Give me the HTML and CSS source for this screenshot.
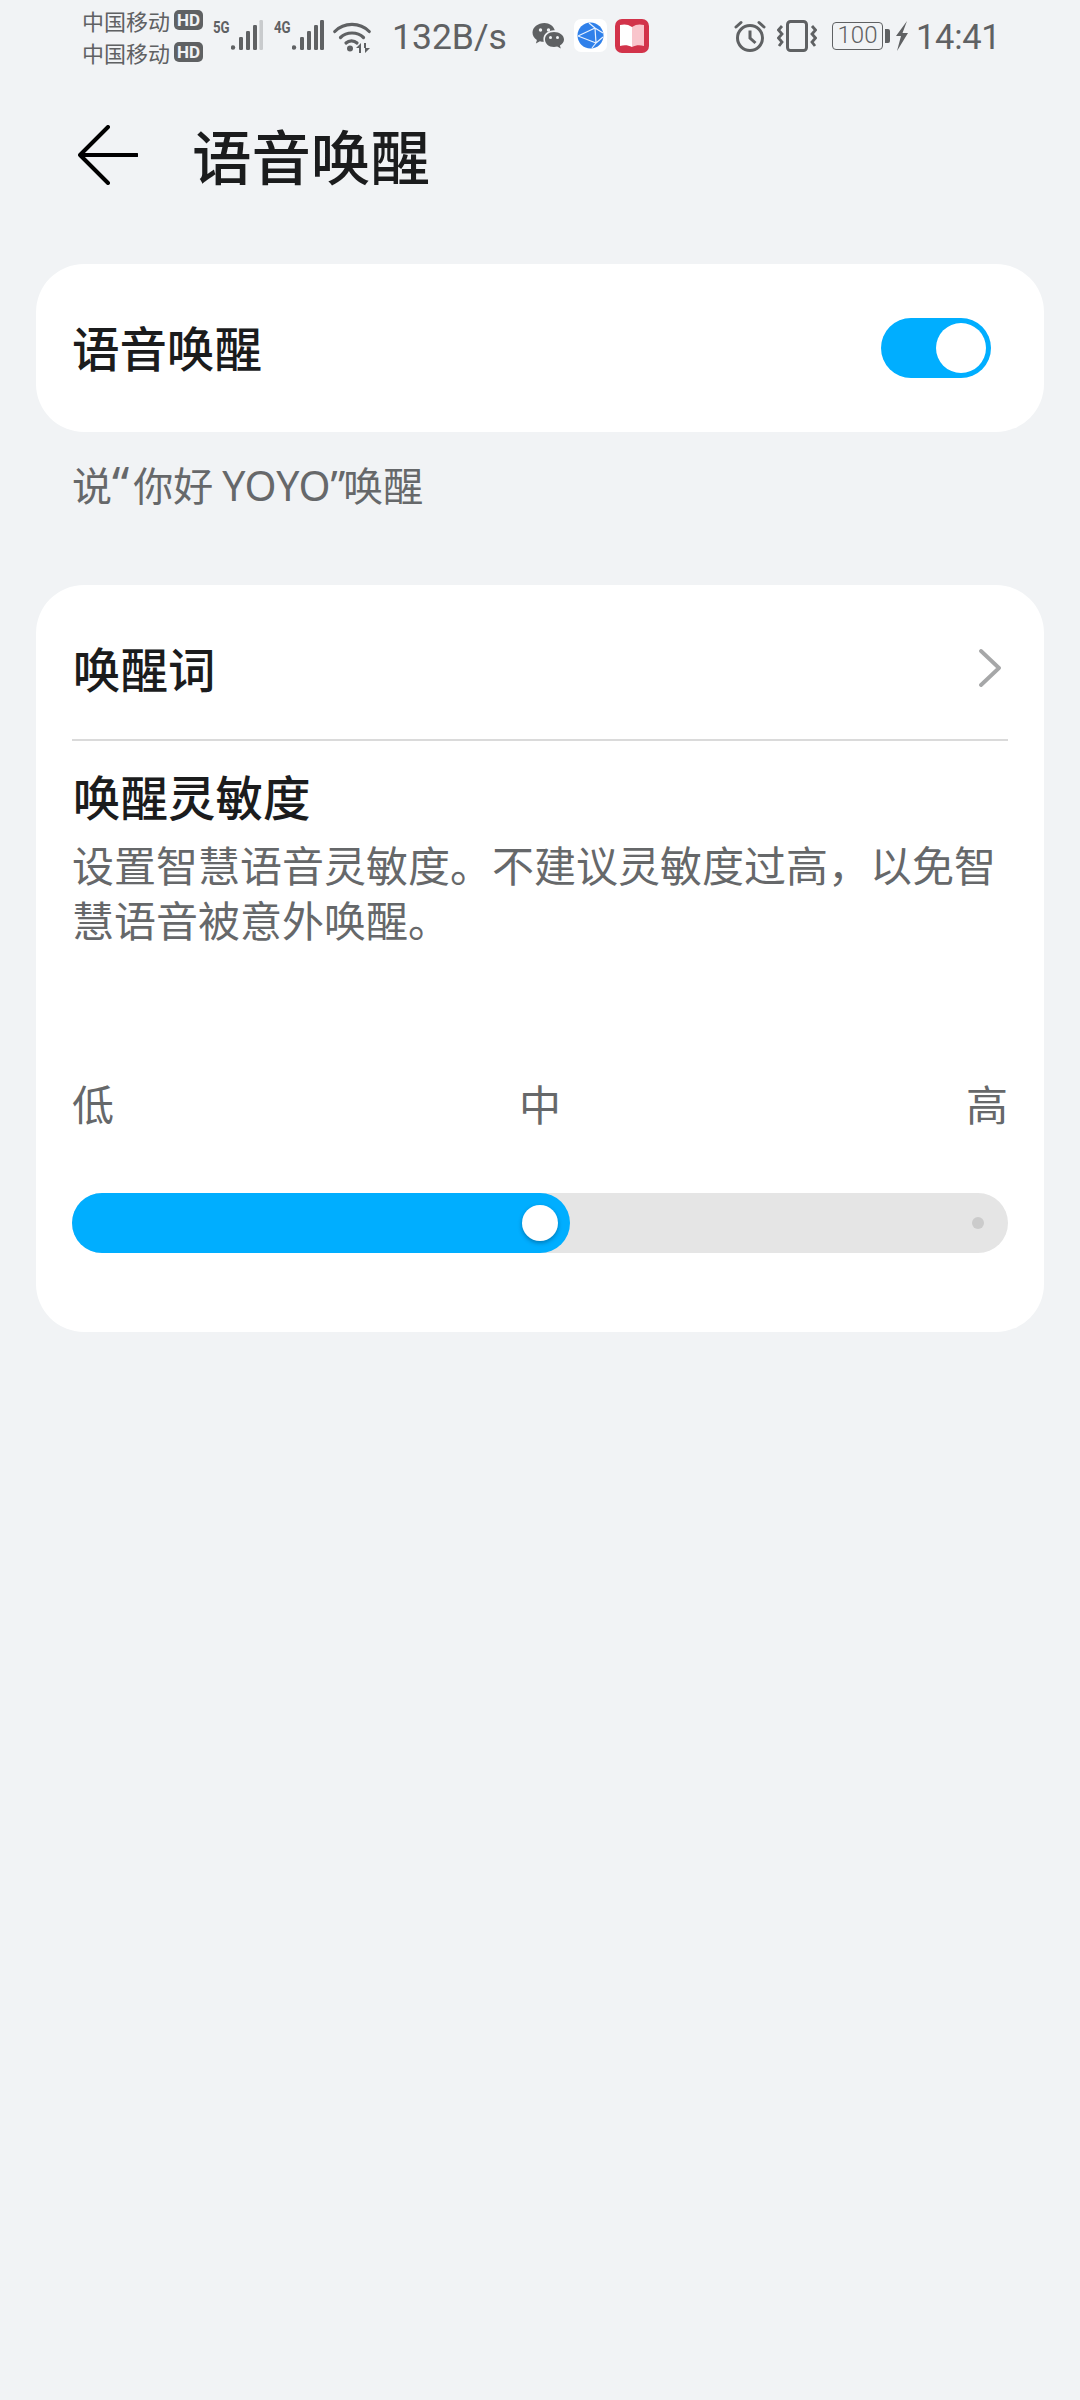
FILE: index.html
```html
<!DOCTYPE html>
<html lang="zh-CN">
<head>
<meta charset="utf-8">
<title>语音唤醒</title>
<link rel="stylesheet" href="styles.css">
</head>
<body>
<div class="statusbar">
  <div class="carriers">
    <div class="carrier"><span>中国移动</span><span class="hd">HD</span></div>
    <div class="carrier"><span>中国移动</span><span class="hd">HD</span></div>
  </div>
  <div class="net net-first">
    <span class="gen">5G</span>
    <svg class="bars" viewBox="0 0 32 30"><circle cx="2" cy="27.5" r="2.200" fill="#5f6163"/><rect x="8" y="17" width="4" height="13" rx="1.200" fill="#5f6163"/><rect x="15" y="11" width="4" height="19" rx="1.200" fill="#5f6163"/><rect x="22" y="5" width="4" height="25" rx="1.200" fill="#5f6163"/><rect x="28.400" y="0" width="3.600" height="30" rx="1.200" fill="#c9cbcd"/></svg>
  </div>
  <div class="net net-second">
    <span class="gen">4G</span>
    <svg class="bars" viewBox="0 0 32 30"><circle cx="2" cy="27.5" r="2.200" fill="#5f6163"/><rect x="8" y="17" width="4" height="13" rx="1.200" fill="#5f6163"/><rect x="15" y="11" width="4" height="19" rx="1.200" fill="#5f6163"/><rect x="22" y="5" width="4" height="25" rx="1.200" fill="#5f6163"/><rect x="28" y="0" width="4" height="30" rx="1.200" fill="#5f6163"/></svg>
  </div>
  <svg class="wifi" viewBox="0 0 38 32"><g fill="none" stroke="#5f6163" stroke-width="3.200" stroke-linecap="round"><path d="M1.800 10.500C11 1 27 1 36.200 10.500"/><path d="M7.500 16.500C13.500 10.500 24.500 10.500 30.500 16.500"/><path d="M13 22C16 19.200 21 19.200 24 22"/></g><circle cx="17" cy="27.500" r="3" fill="#5f6163"/><path d="M23 27l5-5v10h-2v-5zM31 22h2v5h4l-5 5v-5h-1z" fill="#5f6163"/></svg>
  <span class="speed">132B/s</span>
  <svg class="wechat" viewBox="0 0 32 28"><path d="M12 0C5.400 0 0 4.300 0 9.600c0 3 1.700 5.600 4.400 7.400L3.400 20.400l4-2.200c1.200.4 2.500.6 3.900.6-.3-1-.4-1.800-.4-2.700 0-5 4.700-8.800 10.600-8.800h.8C21 2.900 16.900 0 12 0z" fill="#5f6163"/><circle cx="8" cy="7" r="1.700" fill="#f1f3f5"/><circle cx="16" cy="7" r="1.700" fill="#f1f3f5"/><path d="M21.500 9C15.900 9 12.500 12.500 12.500 16.400s3.400 7.500 9 7.500c1.100 0 2.200-.2 3.200-.5l3.600 2-.9-3c2.700-1.600 4.100-3.700 4.100-6 0-3.900-4.400-7.400-10-7.400z" fill="#5f6163"/><circle cx="18" cy="14.500" r="1.500" fill="#f1f3f5"/><circle cx="25" cy="14.500" r="1.500" fill="#f1f3f5"/></svg>
  <svg class="app-blue" viewBox="0 0 33 33"><rect width="33" height="33" rx="7" fill="#fff"/><circle cx="16.500" cy="16.500" r="13" fill="#2f80ea"/><g fill="none" stroke="#e6f0ff" stroke-width="1.200"><path d="M4 17L21 9M4 17l18 7M21 9l1 15M21 9L15 4M22 24l-4 5M21 9l8 5M22 24l7-6"/></g></svg>
  <svg class="app-red" viewBox="0 0 34 34"><rect width="34" height="34" rx="7" fill="#d2334a"/><path d="M5 6c4-1 8-1 12 2v20c-4-2-8-2-12-1z" fill="#fff"/><path d="M17 8c4-3 8-3 12-2v21c-4-1-8-1-12 1z" fill="#f9c5cc"/></svg>
  <div class="status-right">
    <svg class="alarm" viewBox="0 0 32 32"><circle cx="16" cy="18" r="12.500" fill="none" stroke="#5f6163" stroke-width="3"/><path d="M16 10.500V18l5.500 5" fill="none" stroke="#5f6163" stroke-width="3"/><path d="M2 7l5-4.500M30 7l-5-4.500" fill="none" stroke="#5f6163" stroke-width="3" stroke-linecap="round"/></svg>
    <svg class="vibrate" viewBox="0 0 40 32"><rect x="10.500" y="1.500" width="19" height="29" rx="3" fill="none" stroke="#5f6163" stroke-width="3"/><path d="M5 6L1.500 10 5 14 1.500 18 5 22 2 26M35 6l3.500 4L35 14l3.500 4L35 22l3 4" fill="none" stroke="#5f6163" stroke-width="2.800"/></svg>
    <div class="battery"><span class="battery-box">100</span><span class="battery-nib"></span></div>
    <svg class="bolt" viewBox="0 0 14 30"><path d="M12 0L1 15h5L2 30 13 12H7.500z" fill="#5f6163"/></svg>
    <span class="clock">14:41</span>
  </div>
</div>

<div class="toolbar">
  <svg class="back" viewBox="0 0 60 60"><path d="M59 30H2M30 2L2 30l28 28" fill="none" stroke="#000" stroke-width="4" stroke-linecap="round" stroke-linejoin="round"/></svg>
  <h1 class="page-title">语音唤醒</h1>
</div>

<section class="card card-switch">
  <span class="item-title">语音唤醒</span>
  <span class="switch"><span class="switch-knob"></span></span>
</section>
<p class="hint">说<span class="latin quote-open">“</span>你好 <span class="latin quote-close">YOYO”</span>唤醒</p>

<section class="card card-main">
  <div class="row-link">
    <span class="item-title">唤醒词</span>
    <svg class="chevron" viewBox="0 0 22 38"><path d="M2 2l18 17L2 36" fill="none" stroke="#a6a7a8" stroke-width="3.800" stroke-linecap="round" stroke-linejoin="round"/></svg>
  </div>
  <div class="sensitivity">
    <div class="item-title">唤醒灵敏度</div>
    <p class="desc">设置智慧语音灵敏度。不建议灵敏度过高，以免智慧语音被意外唤醒。</p>
    <div class="levels"><span>低</span><span>中</span><span>高</span></div>
    <div class="slider">
      <div class="slider-fill"><span class="slider-thumb"></span></div>
      <span class="slider-dot"></span>
    </div>
  </div>
</section>
</body>
</html>
```

FILE: styles.css
```css
* { box-sizing: border-box; }
html, body { margin: 0; padding: 0; }
body {
  width: 1080px;
  height: 2400px;
  background: #f1f3f5;
  font-family: "Noto Sans CJK SC", "Noto Sans", sans-serif;
  overflow: hidden;
}
.statusbar {
  height: 70px;
  padding-left: 82px;
  display: flex;
  align-items: flex-start;
  color: #5f6163;
  font-family: Roboto, "Noto Sans CJK SC", sans-serif;
}
.carriers { width: 121px; padding-top: 4px; flex: none; }
.carrier {
  display: flex;
  align-items: center;
  height: 32px;
  font-size: 22px;
  font-family: "Noto Sans CJK SC", sans-serif;
}
.hd {
  margin-left: 4px;
  width: 29px;
  height: 20px;
  border-radius: 5px;
  background: #5f6163;
  color: #f1f3f5;
  font: 700 17px/20px Roboto, sans-serif;
  text-align: center;
}
.net { display: flex; flex: none; align-items: flex-start; margin-top: 20px; }
.net-first { margin-left: 10px; }
.net-second { margin-left: 11px; }
.gen {
  width: 18px;
  font: 700 17px/14px Roboto, sans-serif;
  transform: scaleX(.78);
  transform-origin: left;
}
.bars { width: 32px; height: 30px; display: block; }
.wifi { width: 38px; height: 32px; margin: 21px 0 0 9px; flex: none; }
.speed { margin: 15px 0 0 21px; font-size: 35.500px; line-height: 44px; width: 115px; flex: none; }
.wechat { width: 33px; height: 28px; margin: 23px 0 0 25px; flex: none; }
.app-blue { width: 33px; height: 33px; margin: 19px 0 0 9px; flex: none; }
.app-red { width: 34px; height: 34px; margin: 19px 0 0 8px; flex: none; }
.status-right { display: flex; align-items: flex-start; margin-left: 85px; flex: none; }
.alarm { width: 32px; height: 32px; margin-top: 20px; }
.vibrate { width: 40px; height: 32px; margin: 20px 0 0 11px; }
.battery { display: flex; align-items: center; margin: 22px 0 0 15px; height: 28px; }
.battery-box {
  width: 51px;
  height: 28px;
  border: 1.500px solid #5f6163;
  border-radius: 4px;
  font-size: 24px;
  font-weight: 300;
  line-height: 25px;
  text-align: center;
}
.battery-nib { width: 5px; height: 14px; margin-left: 2px; border-radius: 0 2px 2px 0; background: #5f6163; }
.bolt { width: 14px; height: 30px; margin: 21px 0 0 5px; }
.clock { margin: 15px 0 0 7px; font-size: 34.500px; line-height: 44px; letter-spacing: -.3px; }

.toolbar { height: 170px; padding-left: 78px; display: flex; align-items: center; }
.back { width: 60px; height: 60px; flex: none; }
.page-title {
  margin: -2px 0 0 54px;
  font-size: 59.500px;
  font-weight: 500;
  line-height: 80px;
  color: #1b1c1d;
}
.card {
  margin: 24px 36px 0;
  background: #fff;
  border-radius: 48px;
}
.card-switch {
  height: 168px;
  padding: 0 53px 0 36px;
  display: flex;
  align-items: center;
  justify-content: space-between;
}
.card-switch .item-title { margin-top: -2px; }
.item-title { font-size: 47.500px; font-weight: 500; line-height: 64px; color: #1b1c1d; }
.switch {
  width: 110px;
  height: 60px;
  border-radius: 30px;
  background: #00aeff;
  padding: 5px;
  display: flex;
  justify-content: flex-end;
}
.switch-knob { width: 50px; height: 50px; border-radius: 50%; background: #fff; }
.hint {
  margin: 25px 0 0 72px;
  font-size: 40px;
  line-height: 54px;
  color: #66686a;
}
.latin { font-family: "Noto Sans", sans-serif; font-size: 41px; }
.quote-open { margin-right: 4px; font-size: 48px; line-height: 40px; }
.quote-close { margin-right: -2px; }
.card-main { margin-top: 73px; height: 747px; padding: 0 36px; }
.row-link {
  height: 156px;
  padding: 12px 7px 0 1px;
  display: flex;
  align-items: center;
  justify-content: space-between;
  border-bottom: 2px solid #dadada;
}
.chevron { width: 22px; height: 38px; }
.sensitivity { padding-top: 23px; }
.sensitivity .item-title { padding-left: 1px; }
.desc {
  margin: 8px 0 0;
  font-size: 42px;
  line-height: 55px;
  color: #66686a;
}
.levels {
  margin-top: 129px;
  display: flex;
  justify-content: space-between;
  font-size: 42px;
  line-height: 56px;
  color: #66686a;
}
.slider {
  margin-top: 62px;
  height: 60px;
  border-radius: 30px;
  background: #e5e5e5;
  display: flex;
  align-items: center;
  justify-content: space-between;
  padding-right: 24px;
}
.slider-fill {
  width: 498px;
  height: 60px;
  border-radius: 30px;
  background: #00aeff;
  display: flex;
  align-items: center;
  justify-content: flex-end;
  padding-right: 12px;
}
.slider-thumb {
  width: 36px;
  height: 36px;
  border-radius: 50%;
  background: #fff;
  box-shadow: 0 2px 4px rgba(0, 60, 100, .45);
}
.slider-dot { width: 12px; height: 12px; border-radius: 50%; background: #cbcbcb; }
```
